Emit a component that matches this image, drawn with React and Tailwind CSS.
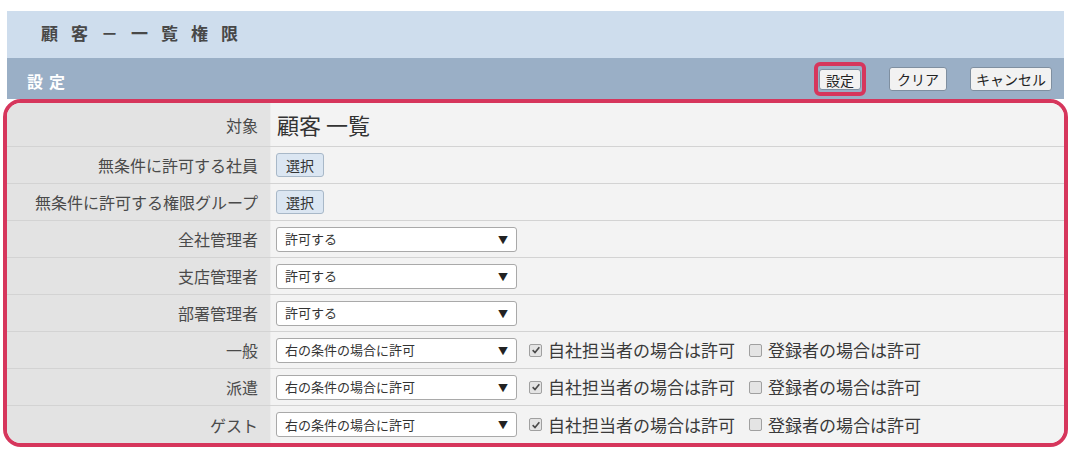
import React from "react";

const font = { fontFamily: '"Noto Sans CJK JP", "Noto Sans", sans-serif' };

const Check = ({ checked }) => (
  <span className="inline-flex items-center justify-center w-[13px] h-[13px] border border-[#a0a0a0] rounded-[2px] bg-[#e4e4e4] mr-[6px]">
    {checked && (
      <svg viewBox="0 0 12 12" className="w-[10px] h-[10px]">
        <path d="M2 6.2 L4.8 9 L10 2.8" fill="none" stroke="#4a4a4a" strokeWidth="2" />
      </svg>
    )}
  </span>
);

const Select = ({ value }) => (
  <div className="w-[241px] h-[25px] bg-white border border-[#a9a9a9] rounded-[3px] flex items-center justify-between pl-[8px] pr-[8px] text-[13px] text-[#333]">
    <span>{value}</span>
    <span className="text-[10px] text-[#222]">▼</span>
  </div>
);

const PickButton = () => (
  <button className="w-[48px] h-[24px] bg-[#dbe6f2] border border-[#a8b8c8] rounded-[3px] text-[14px] text-[#333]">
    選択
  </button>
);

const Row = ({ label, h = "h-[37px]", last, children }) => (
  <div className={`flex ${h} ${last ? "" : "border-b border-[#d3d3d3]"}`}>
    <div className="w-[264px] bg-[#e3e3e3] border-r border-[#ededed] flex items-center justify-end pr-[12px] text-[16px] text-[#4a4a4a]">
      {label}
    </div>
    <div className="flex-1 bg-[#f3f3f3] flex items-center pl-[5px] text-[#3a3a3a]">{children}</div>
  </div>
);

const Conditional = () => (
  <>
    <Select value="右の条件の場合に許可" />
    <span className="flex items-center ml-[12px] text-[17px]">
      <Check checked />
      自社担当者の場合は許可
    </span>
    <span className="flex items-center ml-[14px] text-[17px]">
      <Check />
      登録者の場合は許可
    </span>
  </>
);

export default function App() {
  return (
    <div className="w-[1076px] h-[462px] bg-white pt-[11px]" style={font}>
      <div className="ml-[7px] w-[1057px]">
        <div className="h-[47px] bg-[#cedded] flex items-center pl-[34px] pb-[4px] text-[17px] font-bold text-[#484848] tracking-[13px]">
          顧客－一覧権限
        </div>
        <div className="h-[41px] bg-[#9aafc6] flex items-center justify-between pl-[20px] pr-[12px]">
          <span className="text-white font-bold text-[16px] tracking-[6px] pt-[4px]">設定</span>
          <div className="flex items-center gap-[23px]">
            <div className="border-[4px] border-[#d6365c] rounded-[6px] p-[1px]">
              <button className="h-[21px] w-[42px] bg-[#f2f2f2] border border-[#7f8fa0] rounded-[3px] text-[14px] text-[#222] leading-none">
                設定
              </button>
            </div>
            <button className="h-[24px] w-[58px] bg-[#f2f2f2] border border-[#7f8fa0] rounded-[3px] text-[14px] text-[#222] leading-none">
              クリア
            </button>
            <button className="h-[24px] w-[82px] bg-[#f2f2f2] border border-[#7f8fa0] rounded-[3px] text-[14px] text-[#222] leading-none">
              キャンセル
            </button>
          </div>
        </div>
      </div>
      <div className="ml-[3px] w-[1065px] border-[4px] border-[#d6365c] rounded-[18px] overflow-hidden">
        <Row label="対象" h="h-[44px]">
          <span className="text-[22px] text-[#333] pl-[1px]">顧客 一覧</span>
        </Row>
        <Row label="無条件に許可する社員">
          <PickButton />
        </Row>
        <Row label="無条件に許可する権限グループ">
          <PickButton />
        </Row>
        <Row label="全社管理者">
          <Select value="許可する" />
        </Row>
        <Row label="支店管理者">
          <Select value="許可する" />
        </Row>
        <Row label="部署管理者">
          <Select value="許可する" />
        </Row>
        <Row label="一般">
          <Conditional />
        </Row>
        <Row label="派遣">
          <Conditional />
        </Row>
        <Row label="ゲスト" last>
          <Conditional />
        </Row>
      </div>
    </div>
  );
}
